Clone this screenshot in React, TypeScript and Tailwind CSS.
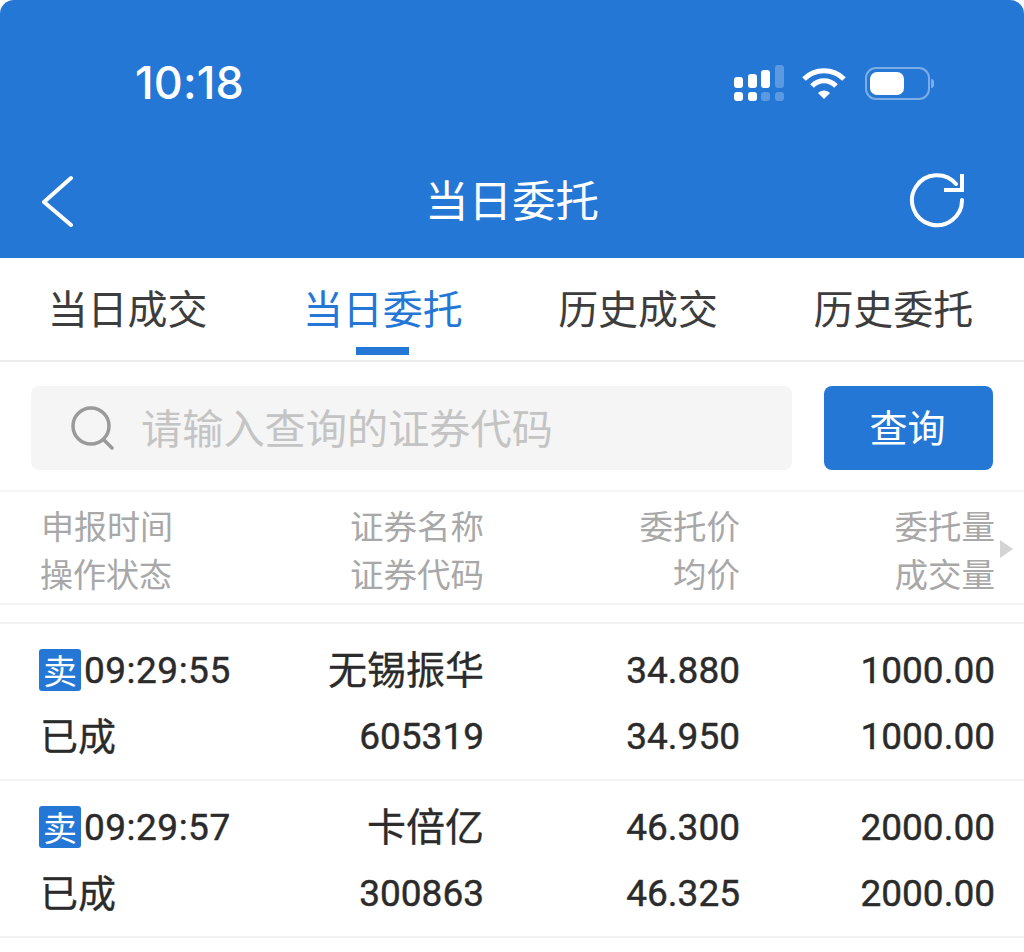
const cjk = 'font-["Noto_Sans_CJK_SC","Noto_Sans",sans-serif]';
const num = 'font-["Roboto",sans-serif] translate-y-[1px] [-webkit-text-stroke:0.45px_#2b2b2b]';
const bolder = '[-webkit-text-stroke:0.3px_#2b2b2b]';

const tabs = ['当日成交', '当日委托', '历史成交', '历史委托'];

const rows = [
  { time: '09:29:55', name: '无锡振华', code: '605319', price: '34.880', avg: '34.950', qty: '1000.00', done: '1000.00' },
  { time: '09:29:57', name: '卡倍亿', code: '300863', price: '46.300', avg: '46.325', qty: '2000.00', done: '2000.00' },
];

const SignalIcon = () => (
  <svg width="50" height="36" viewBox="0 0 50 36" fill="white">
    <rect x="0" y="12" width="9" height="11" rx="3" />
    <rect x="14" y="9" width="9" height="14" rx="3" />
    <rect x="27" y="5" width="9" height="18" rx="3" />
    <rect x="41" y="0" width="9" height="23" rx="3" opacity="0.25" />
    <rect x="0" y="27" width="9" height="9" rx="3" />
    <rect x="14" y="27" width="9" height="9" rx="3" />
    <rect x="27" y="27" width="9" height="9" rx="3" opacity="0.25" />
    <rect x="41" y="27" width="9" height="9" rx="3" opacity="0.25" />
  </svg>
);

const WifiIcon = () => (
  <svg width="44" height="32" viewBox="0 0 44 32" fill="none" stroke="white" strokeWidth="5">
    <path d="M2 12 C13 1 31 1 42 12" />
    <path d="M10 19 C17 12 27 12 34 19" />
    <path d="M16 26 L22 32 L28 26 C25 22.500 19 22.500 16 26 Z" fill="white" stroke="none" />
  </svg>
);

const BatteryIcon = () => (
  <div className="flex items-center gap-[1px]">
    <div className="flex h-[33px] w-[65px] items-center rounded-[11px] border-[2.5px] border-white/40 p-[3px]">
      <div className="h-[23px] w-[34px] rounded-[7px] bg-white" />
    </div>
    <div className="h-[9px] w-[3px] rounded-r-full bg-white/40" />
  </div>
);

// the refresh glyph in the nav bar, open at the right with the arrow head on top
const RefreshIcon = () => (
  <svg width="56" height="56" viewBox="0 0 56 56" fill="none" stroke="white" strokeWidth="4">
    <path d="M53 28 A25 25 0 1 1 47 12" strokeLinecap="round" />
    <path d="M53 2 V18 H35" />
  </svg>
);

export default function App() {
  return (
    <div className={`h-[952px] w-[1024px] overflow-hidden bg-white ${cjk}`}>
      <header className="h-[258px] rounded-t-[14px] bg-[#2577d6] text-white">
        <div className="flex h-[150px] items-start justify-between pl-[135px] pr-[90px] pt-[58px]">
          <span className="font-['Inter',sans-serif] text-[45px] font-medium leading-[50px] tracking-[0.1px]">10:18</span>
          <div className="flex items-center pt-[7px]">
            <SignalIcon />
            <div className="ml-[18px]"><WifiIcon /></div>
            <div className="ml-[19px]"><BatteryIcon /></div>
          </div>
        </div>
        <div className="grid h-[108px] grid-cols-[1fr_auto_1fr] items-start px-[41px] pt-[22px]">
          <svg className="mt-[3px]" width="34" height="52" viewBox="0 0 34 52" fill="none" stroke="white" strokeWidth="4" strokeLinecap="round" strokeLinejoin="round">
            <path d="M30 3 L3 27 L30 50" />
          </svg>
          <h1 className="text-[43.5px] font-normal leading-[54px]">当日委托</h1>
          <div className="flex justify-end pr-[18px]"><RefreshIcon /></div>
        </div>
      </header>

      <nav className="grid h-[104px] grid-cols-4 border-b-2 border-[#ececec] pr-[3px]">
        {tabs.map((t, i) => (
          <div key={t} className={`flex flex-col items-center ${i === 1 ? 'text-[#2577d6]' : 'text-[#3d3d3d]'}`}>
            <span className="mt-[22px] text-[40px] leading-[54px]">{t}</span>
            {i === 1 && <div className="mt-[13px] h-[8px] w-[53px] bg-[#2577d6]" />}
          </div>
        ))}
      </nav>

      <div className="flex h-[130px] items-start gap-[32px] border-b-2 border-[#f5f5f5] px-[31px] pt-[24px]">
        <div className="flex h-[84px] flex-1 items-center rounded-[8px] bg-[#f5f5f5] pl-[39px]">
          <svg width="46" height="46" viewBox="0 0 46 46" fill="none" stroke="#9a9a9a" strokeWidth="3.500" strokeLinecap="round">
            <circle cx="21" cy="21" r="18" />
            <path d="M34 35 L42 43" />
          </svg>
          <span className="-mt-[4px] ml-[25px] text-[41.2px] leading-[54px] text-[#c4c4c4]">请输入查询的证券代码</span>
        </div>
        <button className="h-[84px] w-[169px] rounded-[8px] bg-[#2577d6] pb-[5px] pr-[2px] text-[38px] text-white">查询</button>
      </div>

      <div className="relative h-[113px] border-b-2 border-[#f5f5f5] pt-[9px] text-[33.5px] leading-[48px] text-[#a8a8a8]">
        <div className="grid grid-cols-[1fr_auto_256px_255px] pl-[41px] pr-[29px]">
          <div className="text-[33px]">申报时间<br /><span className="-ml-[1px]">操作状态</span></div>
          <div className="text-right">证券名称<br />证券代码</div>
          <div className="text-right">委托价<br />均价</div>
          <div className="text-right">委托量<br />成交量</div>
        </div>
        <div className="absolute right-[11px] top-[48px] h-0 w-0 border-y-[9px] border-l-[13px] border-y-transparent border-l-[#d4d4d4]" />
      </div>

      <div className="mt-[17px] border-t-2 border-[#f3f3f3]">
        {rows.map(r => (
          <div key={r.code} className="grid h-[157px] grid-cols-[1fr_auto_256px_255px] border-b-2 border-[#f3f3f3] pl-[39px] pr-[29px] pt-[13px] text-[#2b2b2b]">
            <div>
              <div className="flex h-[66px] items-center">
                <span className="flex h-[42px] w-[42px] items-center justify-center rounded-[3px] bg-[#2577d6] text-[34px] leading-none text-white">卖</span>
                <span className={`ml-[3px] text-[37px] tracking-[0.5px] ${num}`}>{r.time}</span>
              </div>
              <div className={`flex h-[66px] -translate-y-[3px] items-center pl-[1px] text-[38px] ${bolder}`}>已成</div>
            </div>
            <div className="text-right">
              <div className={`flex h-[66px] -translate-y-[3px] items-center justify-end text-[39px] ${bolder}`}>{r.name}</div>
              <div className={`flex h-[66px] items-center justify-end text-[37px] ${num}`}>{r.code}</div>
            </div>
            <div className="text-right text-[37px]">
              <div className={`flex h-[66px] items-center justify-end ${num}`}>{r.price}</div>
              <div className={`flex h-[66px] items-center justify-end ${num}`}>{r.avg}</div>
            </div>
            <div className="text-right text-[37px]">
              <div className={`flex h-[66px] items-center justify-end ${num}`}>{r.qty}</div>
              <div className={`flex h-[66px] items-center justify-end ${num}`}>{r.done}</div>
            </div>
          </div>
        ))}
      </div>
    </div>
  );
}
